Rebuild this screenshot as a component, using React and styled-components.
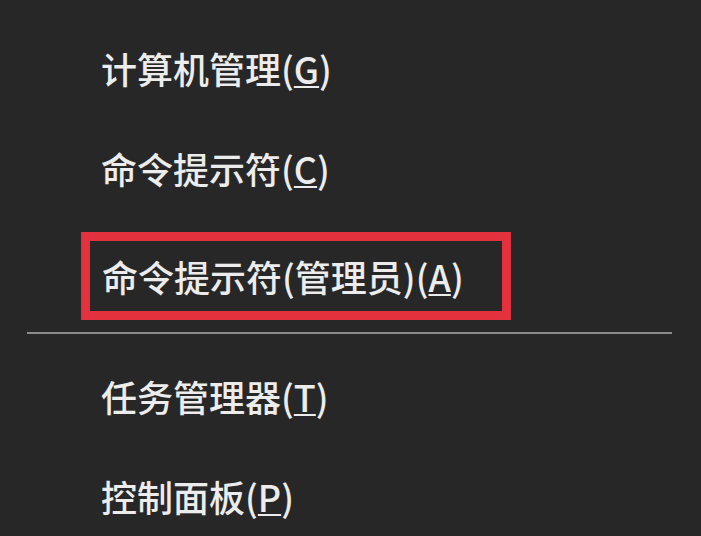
import styled, { createGlobalStyle } from 'styled-components';

const GlobalStyle = createGlobalStyle`
  html, body {
    margin: 0;
    padding: 0;
    background: #272727;
  }
  body {
    width: 701px;
    height: 536px;
    overflow: hidden;
  }
`;

const Menu = styled.div`
  display: flex;
  flex-direction: column;
  padding-top: 18px;
  font-family: "Noto Sans CJK SC", "Noto Sans", sans-serif;
  font-size: 36px;
  font-weight: 500;
  color: #ececec;
`;

const Item = styled.div`
  display: flex;
  align-items: center;
  height: 100px;
  padding-left: 101px;
  white-space: nowrap;
`;

const Boxed = styled.div`
  display: flex;
  align-items: center;
  box-sizing: border-box;
  height: 88px;
  width: 430px;
  margin: 14px 0 0 81px;
  padding-left: 12px;
  border: 9px solid #e3323d;
  white-space: nowrap;
`;

const Separator = styled.div`
  height: 2px;
  width: 645px;
  margin: 12px 0 12px 27px;
  background: #8b8b8b;
`;

const Key = styled.span`
  text-decoration: underline;
  text-decoration-thickness: 2px;
  text-underline-offset: 2px;
`;

function Label({ text, hotkey }) {
  return (
    <>
      {text}(<Key>{hotkey}</Key>)
    </>
  );
}

export default function App() {
  return (
    <>
      <GlobalStyle />
      <Menu>
        <Item>
          <Label text="计算机管理" hotkey="G" />
        </Item>
        <Item>
          <Label text="命令提示符" hotkey="C" />
        </Item>
        <Boxed>
          <Label text="命令提示符(管理员)" hotkey="A" />
        </Boxed>
        <Separator />
        <Item>
          <Label text="任务管理器" hotkey="T" />
        </Item>
        <Item>
          <Label text="控制面板" hotkey="P" />
        </Item>
      </Menu>
    </>
  );
}
